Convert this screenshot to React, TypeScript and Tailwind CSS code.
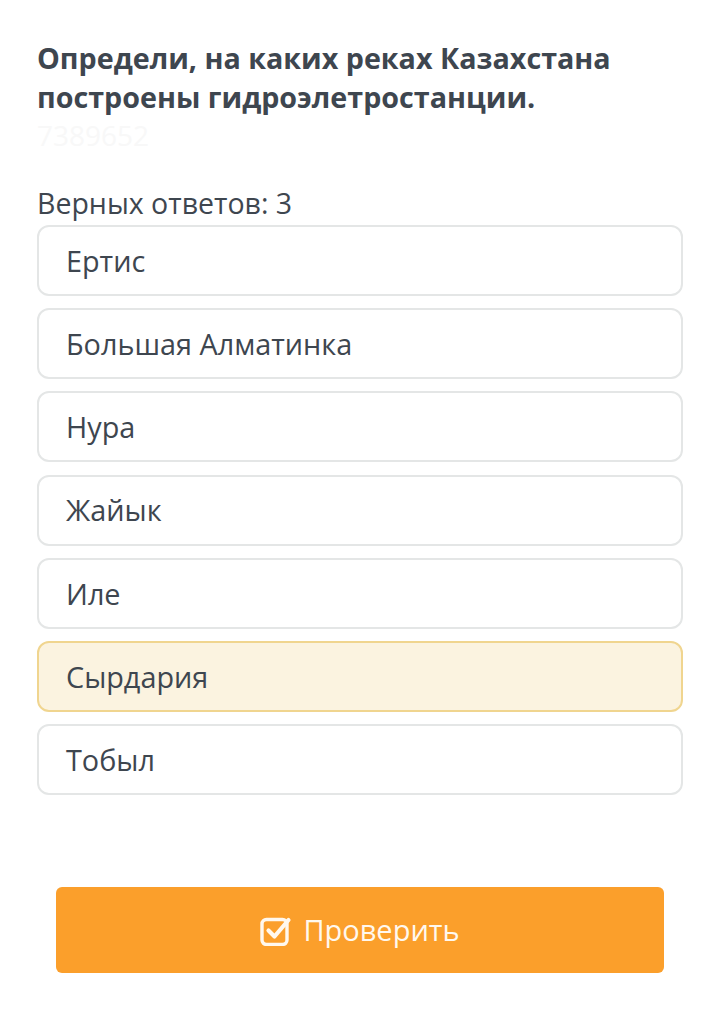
const options = [
  { text: 'Ертис', selected: false },
  { text: 'Большая Алматинка', selected: false },
  { text: 'Нура', selected: false },
  { text: 'Жайык', selected: false },
  { text: 'Иле', selected: false },
  { text: 'Сырдария', selected: true },
  { text: 'Тобыл', selected: false },
];

export default function App() {
  return (
    <div className="w-[720px] h-[1010px] bg-white font-['Open_Sans',sans-serif] text-[#3e464f]">
      <div className="px-[37px] pt-[38px]">
        <h1 className="text-[28.7px] leading-[39px] font-bold">
          Определи, на каких реках Казахстана построены гидроэлетростанции.
        </h1>
        <div className="text-[28px] leading-[39px] text-[#f8f8f8]">7389652</div>

        <div className="mt-[30px] text-[28.5px] leading-[36px]">Верных ответов: 3</div>

        <div className="mt-[4px] flex flex-col gap-[12.2px]">
          {options.map((o) => (
            <div
              key={o.text}
              className={
                'h-[71px] rounded-[12px] border-2 flex items-center pl-[27px] text-[28.8px] ' +
                (o.selected ? 'bg-[#fbf3e0] border-[#f0d58f]' : 'bg-white border-[#e4e6e6]')
              }
            >
              {o.text}
            </div>
          ))}
        </div>
      </div>

      <div className="px-[56px] mt-[92px]">
        <button className="w-full h-[86px] rounded-[6px] bg-[#fb9f2b] flex items-center justify-center gap-[11px] text-[#fff8ee] text-[29px]">
          <svg width="32" height="31" viewBox="0 0 32 31" fill="none">
            <rect x="2" y="4.5" width="25" height="25" rx="4.5" stroke="#fff8ee" strokeWidth="3.4" />
            <path d="M8.5 15.5 L14.5 21.5 L28.5 5" stroke="#fff8ee" strokeWidth="4.2" strokeLinecap="round" strokeLinejoin="round" />
          </svg>
          Проверить
        </button>
      </div>
    </div>
  );
}
